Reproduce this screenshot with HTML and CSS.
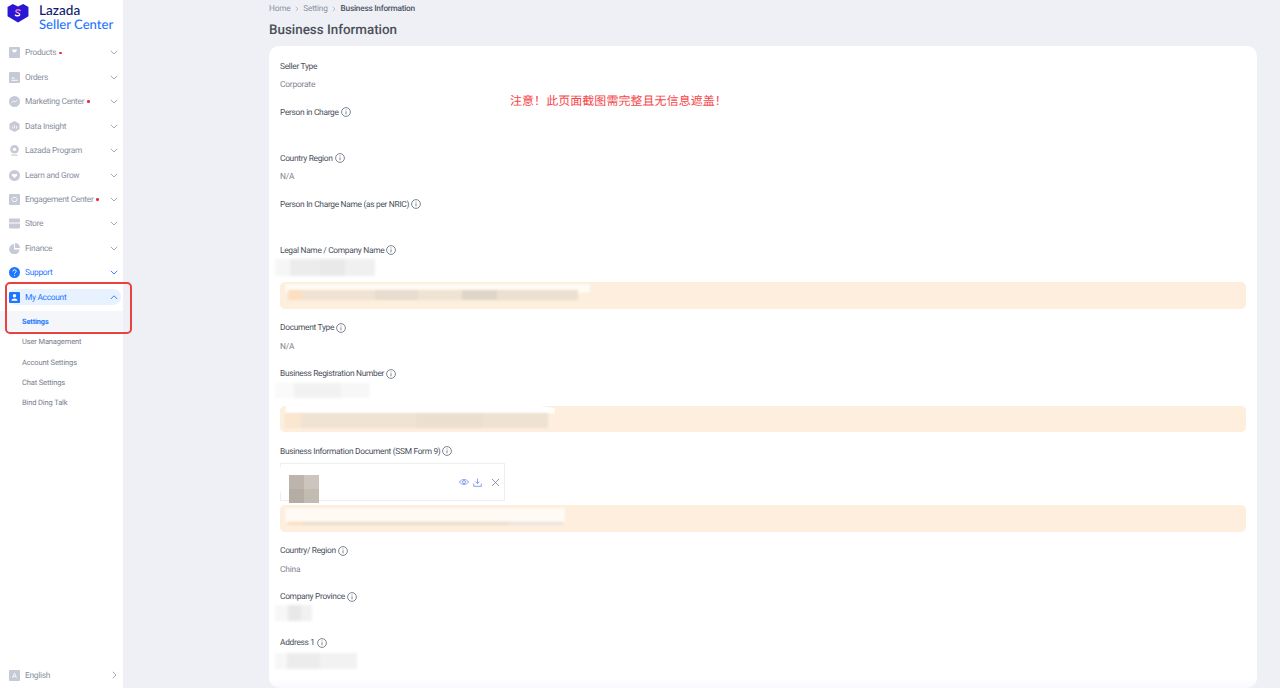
FILE: index.html
```html
<!DOCTYPE html>
<html lang="en">
<head>
<meta charset="utf-8">
<title>Business Information</title>
<link rel="stylesheet" href="styles.css">
</head>
<body>
<div class="app">
  <aside class="sidebar">
    <header class="brand">
      <svg class="brand-mark" viewBox="0 0 22 20"><defs><linearGradient id="brandS" x1="0" y1="0" x2="0" y2="1"><stop offset="0" stop-color="#ff5fc0"/><stop offset="1" stop-color="#ffffff"/></linearGradient></defs><path d="M0 3.2 5.5 0 11 2.600 16.500 0 22 3.200V13l-11 6.600L0 13z" fill="#2a17d6"/><path d="M13.300 6.800c-.8-.9-4.200-1.200-4.500.6-.3 2 4.200 1.500 4 3.700-.2 1.800-3.400 1.600-4.500.6" fill="none" stroke="url(#brandS)" stroke-width="1.500" stroke-linecap="round"/></svg>
      <div class="brand-text"><div class="brand-top">Lazada</div><div class="brand-bottom">Seller Center</div></div>
    </header>
    <nav class="nav">
      <div class="nav-item"><svg class="nav-icon" viewBox="0 0 11 11"><path fill-rule="evenodd" d="M1 0h9a1 1 0 0 1 1 1v9a1 1 0 0 1-1 1H1a1 1 0 0 1-1-1V1a1 1 0 0 1 1-1zm2 2.500c.4 2 1.200 3 2.500 3S7.600 4.500 8 2.500z"/></svg><span class="nav-label">Products</span><i class="dot"></i><svg class="chev" viewBox="0 0 8 5"><path d="M.8.8 4 4 7.200.8"/></svg></div>
      <div class="nav-item"><svg class="nav-icon" viewBox="0 0 11 11"><path fill-rule="evenodd" d="M1 0h9a1 1 0 0 1 1 1v9a1 1 0 0 1-1 1H1a1 1 0 0 1-1-1V1a1 1 0 0 1 1-1zm1.500 5.500v1h3v-1zm0 2.200v1h6v-1z"/></svg><span class="nav-label">Orders</span><svg class="chev" viewBox="0 0 8 5"><path d="M.8.8 4 4 7.200.8"/></svg></div>
      <div class="nav-item"><svg class="nav-icon" viewBox="0 0 11 11"><circle cx="5.500" cy="5.500" r="5.500"/><path d="M2.500 6.500 4.500 5l1.500 1 2.500-2" fill="none" stroke="#fff" stroke-width=".8"/></svg><span class="nav-label">Marketing Center</span><i class="dot"></i><svg class="chev" viewBox="0 0 8 5"><path d="M.8.8 4 4 7.200.8"/></svg></div>
      <div class="nav-item"><svg class="nav-icon" viewBox="0 0 11 11"><path d="M5.500 0 10.500 2.700v5.600L5.500 11 .5 8.300V2.700z"/><path d="M3.500 5.500v2M5.500 4v3.500M7.500 5v2.500" stroke="#fff" stroke-width=".8"/></svg><span class="nav-label">Data Insight</span><svg class="chev" viewBox="0 0 8 5"><path d="M.8.8 4 4 7.200.8"/></svg></div>
      <div class="nav-item"><svg class="nav-icon" viewBox="0 0 11 12"><circle cx="5.500" cy="4.700" r="4.700"/><circle cx="5.500" cy="4.700" r="1.800" fill="#fff"/><path d="M2 11h7" stroke="#c6cad6" stroke-width="1.200"/></svg><span class="nav-label">Lazada Program</span><svg class="chev" viewBox="0 0 8 5"><path d="M.8.8 4 4 7.200.8"/></svg></div>
      <div class="nav-item"><svg class="nav-icon" viewBox="0 0 11 11"><circle cx="5.500" cy="5.500" r="5.500"/><path d="M5.500 8.200 3 5.700c-1-1.300.9-2.800 2.500-1.300 1.600-1.500 3.500 0 2.500 1.300z" fill="#fff"/></svg><span class="nav-label">Learn and Grow</span><svg class="chev" viewBox="0 0 8 5"><path d="M.8.8 4 4 7.200.8"/></svg></div>
      <div class="nav-item"><svg class="nav-icon" viewBox="0 0 11 11"><rect width="11" height="11" rx="1"/><path d="M4 3.500 2.800 5.500 4 7.500h3l1.200-2L7 3.500z" fill="none" stroke="#fff" stroke-width=".8"/></svg><span class="nav-label">Engagement Center</span><i class="dot"></i><svg class="chev" viewBox="0 0 8 5"><path d="M.8.8 4 4 7.200.8"/></svg></div>
      <div class="nav-item"><svg class="nav-icon" viewBox="0 0 11 11"><path d="M1 .5h9a1 1 0 0 1 1 1v3H0v-3a1 1 0 0 1 1-1zM0 5.500h11v4a1 1 0 0 1-1 1H1a1 1 0 0 1-1-1z"/></svg><span class="nav-label">Store</span><svg class="chev" viewBox="0 0 8 5"><path d="M.8.8 4 4 7.200.8"/></svg></div>
      <div class="nav-item"><svg class="nav-icon" viewBox="0 0 11 11"><path d="M5 1v5.500h5.500A5.200 5.200 0 1 1 5 1z"/><path d="M6 0a5 5 0 0 1 5 5H6z"/></svg><span class="nav-label">Finance</span><svg class="chev" viewBox="0 0 8 5"><path d="M.8.8 4 4 7.200.8"/></svg></div>
      <div class="nav-item is-blue"><svg class="nav-icon" viewBox="0 0 11 11"><circle cx="5.500" cy="5.500" r="5.500"/><path d="M3.900 4.300c0-2 3.300-2 3.300 0 0 1.300-1.600 1.200-1.600 2.400M5.600 8v.8" fill="none" stroke="#fff" stroke-width="1"/></svg><span class="nav-label">Support</span><svg class="chev" viewBox="0 0 8 5"><path d="M.8.8 4 4 7.200.8"/></svg></div>
      <div class="nav-item is-blue is-open"><div class="nav-pill"><svg class="nav-icon" viewBox="0 0 11 11"><rect width="11" height="11" rx="1"/><circle cx="5.500" cy="3.800" r="1.700" fill="#fff"/><path d="M2.500 8.800h6c0-3-6-3-6 0z" fill="#fff"/></svg><span class="nav-label">My Account</span><svg class="chev" viewBox="0 0 8 5"><path d="M.8 4 4 .8 7.200 4"/></svg></div></div>
      <ul class="subnav">
        <li class="subnav-item is-current">Settings</li>
        <li class="subnav-item">User Management</li>
        <li class="subnav-item">Account Settings</li>
        <li class="subnav-item">Chat Settings</li>
        <li class="subnav-item">Bind Ding Talk</li>
      </ul>
    </nav>
    <div class="nav-item lang"><svg class="nav-icon" viewBox="0 0 11 11"><rect width="11" height="11" rx="1"/><path d="M3.500 8 5.500 3l2 5M4.300 6.500h2.400" fill="none" stroke="#fff" stroke-width=".8"/></svg><span class="nav-label">English</span><svg class="chev-right" viewBox="0 0 5 8"><path d="M.8.8 4 4 .8 7.200"/></svg></div>
    <div class="annot"></div>
  </aside>

  <main class="main">
    <div class="content">
      <div class="crumbs"><span>Home</span><svg class="crumb-sep" viewBox="0 0 4 6"><path d="M.8.8 3 3 .8 5.200"/></svg><span>Setting</span><svg class="crumb-sep" viewBox="0 0 4 6"><path d="M.8.8 3 3 .8 5.200"/></svg><span class="crumb-now">Business Information</span></div>
      <h1 class="title">Business Information</h1>
      <section class="card">
        <p class="notice">注意！此页面截图需完整且无信息遮盖！</p>

        <div class="field"><div class="label">Seller Type</div><div class="value">Corporate</div></div>
        <div class="field"><div class="label">Person in Charge<svg class="info" viewBox="0 0 10 10"><circle cx="5" cy="5" r="4.400"/><path d="M5 4.300v3M5 2.500v.9"/></svg></div><div class="value"></div></div>
        <div class="field"><div class="label">Country Region<svg class="info" viewBox="0 0 10 10"><circle cx="5" cy="5" r="4.400"/><path d="M5 4.300v3M5 2.500v.9"/></svg></div><div class="value">N/A</div></div>
        <div class="field"><div class="label">Person In Charge Name (as per NRIC)<svg class="info" viewBox="0 0 10 10"><circle cx="5" cy="5" r="4.400"/><path d="M5 4.300v3M5 2.500v.9"/></svg></div><div class="value"></div></div>

        <div class="field"><div class="label">Legal Name / Company Name<svg class="info" viewBox="0 0 10 10"><circle cx="5" cy="5" r="4.400"/><path d="M5 4.300v3M5 2.500v.9"/></svg></div>
          <div class="value"><div class="smudge smudge-legal"></div></div>
          <div class="banner"><div class="wash wash-a"></div><div class="mosaic mosaic-a"></div></div>
        </div>
        <div class="field"><div class="label">Document Type<svg class="info" viewBox="0 0 10 10"><circle cx="5" cy="5" r="4.400"/><path d="M5 4.300v3M5 2.500v.9"/></svg></div><div class="value">N/A</div></div>
        <div class="field"><div class="label">Business Registration Number<svg class="info" viewBox="0 0 10 10"><circle cx="5" cy="5" r="4.400"/><path d="M5 4.300v3M5 2.500v.9"/></svg></div>
          <div class="value"><div class="smudge smudge-reg"></div></div>
          <div class="banner"><div class="wash wash-b"></div><div class="mosaic mosaic-b"></div></div>
        </div>
        <div class="field"><div class="label">Business Information Document (SSM Form 9)<svg class="info" viewBox="0 0 10 10"><circle cx="5" cy="5" r="4.400"/><path d="M5 4.300v3M5 2.500v.9"/></svg></div>
          <div class="file">
            <div class="file-wash"></div>
            <div class="file-thumb"></div>
            <div class="file-actions">
              <svg class="fa fa-eye" viewBox="0 0 10 8"><path d="M.5 4C2.500.7 7.500.7 9.500 4 7.500 7.300 2.500 7.300.5 4z"/><circle cx="5" cy="4" r="1.500"/></svg>
              <svg class="fa fa-down" viewBox="0 0 9 9"><path d="M4.500.5v5M2.500 3.700l2 2 2-2M.7 5.500v2.800h7.600V5.500"/></svg>
              <svg class="fa fa-close" viewBox="0 0 9 9"><path d="M1 1l7 7M8 1 1 8"/></svg>
            </div>
          </div>
          <div class="banner banner-file"><div class="wash wash-c"></div><div class="mosaic mosaic-c"></div></div>
        </div>
        <div class="field"><div class="label">Country/ Region<svg class="info" viewBox="0 0 10 10"><circle cx="5" cy="5" r="4.400"/><path d="M5 4.300v3M5 2.500v.9"/></svg></div><div class="value">China</div></div>
        <div class="field"><div class="label">Company Province<svg class="info" viewBox="0 0 10 10"><circle cx="5" cy="5" r="4.400"/><path d="M5 4.300v3M5 2.500v.9"/></svg></div><div class="value"><div class="smudge smudge-prov"></div></div></div>
        <div class="field"><div class="label">Address 1<svg class="info" viewBox="0 0 10 10"><circle cx="5" cy="5" r="4.400"/><path d="M5 4.300v3M5 2.500v.9"/></svg></div><div class="value"><div class="smudge smudge-addr"></div></div></div>
      </section>
    </div>
  </main>
</div>
</body>
</html>
```
FILE: styles.css
```css
* { box-sizing: border-box; }
html, body { margin: 0; height: 100%; overflow: hidden; }
body { background: #eef0f5; font-family: Roboto, "Noto Sans CJK SC", sans-serif; color: #4a4f5c; text-rendering: geometricPrecision; }
.app { display: flex; height: 688px; }

.sidebar { position: relative; flex: 0 0 123px; width: 123px; height: 688px; background: #fff; display: flex; flex-direction: column; }
.brand { height: 40.6px; display: flex; align-items: flex-start; padding: 4px 0 0 7px; gap: 11px; }
.brand-mark { width: 22px; height: 19px; flex: none; }
.brand-text { font-family: Lato, "Noto Sans", sans-serif; font-weight: 500; line-height: 13.500px; margin-left: -1px; }
.brand-top { font-size: 13.600px; color: #0f1a6e; }
.brand-bottom { font-size: 13.100px; color: #1f76ff; }

.nav { display: flex; flex-direction: column; }
.nav-item { height: 24.450px; display: flex; align-items: center; padding: 0 5px 0 9px; font-size: 8.400px; color: #8a8f9e; position: relative; }
.nav-icon { width: 11px; height: 11px; flex: none; fill: #c6cad6; margin-right: 5px; }
.nav-label { white-space: nowrap; letter-spacing: -.3px; padding-top: 1px; }
.dot { width: 2.500px; height: 2.500px; border-radius: 50%; background: #f0283c; margin-left: 3px; }
.chev { width: 8px; height: 5px; margin-left: auto; fill: none; stroke: #9aa1b0; stroke-width: .9; flex: none; }
.chev-right { width: 5px; height: 8px; margin-left: auto; margin-right: 1px; fill: none; stroke: #9aa1b0; stroke-width: .9; flex: none; }
.is-blue { color: #1f76ff; }
.is-blue .nav-icon { fill: #1f76ff; }
.is-blue .chev { stroke: #1f76ff; }
.is-open { padding: 0 2px 0 8px; }
.nav-pill { flex: 1; height: 16px; display: flex; align-items: center; padding: 0 3px 0 1px; background: #e8f2ff; border-radius: 8px; }
.subnav { list-style: none; margin: 1.800px 0 0; padding: 0; }
.subnav-item { height: 20.250px; line-height: 21.250px; padding-left: 22px; font-size: 7.500px; letter-spacing: -.13px; color: #787e8d; }
.subnav-item.is-current { background: #f5f6fa; color: #1f76ff; font-weight: 700; font-size: 7.400px; }
.lang { margin-top: auto; margin-bottom: .5px; }
.annot { position: absolute; left: 5px; top: 282px; width: 127px; height: 52px; border: 2px solid #e8413f; border-radius: 5px; }

.main { flex: 1; min-width: 0; padding: 0 23px 0 146px; }
.content { width: 988px; }
.crumbs { display: flex; align-items: center; gap: 4px; height: 17px; padding-top: 1px; font-size: 8.300px; letter-spacing: -.25px; color: #8b90a0; }
.crumb-sep { width: 4px; height: 6px; fill: none; stroke: #aab0bc; stroke-width: .8; margin: 0 .5px; }
.crumb-now { color: #4f5565; font-weight: 500; }
.title { margin: 4px 0 0; height: 25px; line-height: 20px; font-size: 13.400px; font-weight: 500; color: #4a4f5a; }

.card { position: relative; height: 642px; background: linear-gradient(180deg, #fff 0 632px, #f8f9fc 642px); border-radius: 10px; padding: 11px 11px 0; overflow: hidden; }
.notice { position: absolute; left: 241px; top: 47px; margin: 0; font-size: 12px; line-height: 16px; letter-spacing: .05px; color: #f4474a; font-family: "Noto Sans CJK SC", sans-serif; white-space: nowrap; }

.field { margin-bottom: 10px; }
.label { height: 18px; line-height: 18px; padding-top: 1px; font-size: 8.400px; letter-spacing: -.31px; color: #4a4f5c; display: flex; align-items: center; gap: 2px; white-space: nowrap; }
.value { position: relative; height: 18px; line-height: 18px; padding-top: 1px; font-size: 8.400px; letter-spacing: -.2px; color: #7f8492; }
.info { width: 10px; height: 10px; flex: none; margin-top: -1px; fill: none; stroke: #5d6473; stroke-width: .8; }

.smudge { position: absolute; filter: blur(1.500px); }
.smudge-legal { left: -5px; top: 0; width: 100px; height: 17px; background: linear-gradient(90deg, #f6f6f6 0 15%, #ececec 15% 45%, #e9e9e9 45% 70%, #f0f0f0 70%); }
.smudge-reg { left: -5px; top: 0; width: 95px; height: 15px; background: linear-gradient(90deg, #fafafa 0 20%, #f2f2f2 20% 70%, #f7f7f7 70%); }
.smudge-prov { left: -5px; top: -1px; width: 37px; height: 16px; background: linear-gradient(90deg, #f7f7f7 0 35%, #e8e8e8 35% 70%, #f1f1f1 70%); }
.smudge-addr { left: -5px; top: 1px; width: 82px; height: 16px; background: linear-gradient(90deg, #f7f7f7 0 15%, #ececec 15% 55%, #f2f2f2 55%); }

.banner { position: relative; height: 26.500px; margin-top: 5px; background: #fdeedd; border-radius: 5px; }
.banner-file { margin-top: 4px; }
.wash { position: absolute; background: #fffaf4; filter: blur(1px); }
.mosaic { position: absolute; filter: blur(.8px); }
.wash-a { left: 5px; top: 2px; width: 305px; height: 9px; }
.mosaic-a { left: 8px; top: 8px; width: 290px; height: 10px; background: linear-gradient(90deg, #fbdfc0 0 5%, #f0e3d3 5% 30%, #e7dccd 30% 45%, #efe3d4 45% 60%, #e0d6c8 60% 72%, #ece0d1 72%); }
.wash-b { left: 5px; top: -3px; width: 270px; height: 11px; background: #fff; clip-path: polygon(0 30%, 55% 30%, 70% 0, 85% 0, 100% 50%, 100% 100%, 0 100%); }
.mosaic-b { left: 5px; top: 7px; width: 263px; height: 15px; background: linear-gradient(90deg, #fbe6cf 0 6%, #efe3d4 6% 50%, #ebdfcf 50% 75%, #eee2d3 75%); }
.wash-c { left: 5px; top: 3px; width: 280px; height: 14px; background: #fffaf4; }
.mosaic-c { left: 8px; top: 17px; width: 275px; height: 3px; background: linear-gradient(90deg, #fbdfc0 0 5%, #e9decf 5% 80%, #ece4e0 80%); }

.file { position: relative; width: 225px; height: 38px; margin-top: 3px; border: 1px solid #eceef2; display: flex; align-items: center; justify-content: flex-end; }
.file-wash { position: absolute; left: -3px; top: 3px; width: 118px; height: 25px; background: #fff; filter: blur(1px); }
.file-thumb { position: absolute; left: 8px; top: 11px; width: 30px; height: 28px; background: linear-gradient(90deg, #bdb5ac 0 50%, #cbc5bd 50%) top / 100% 50% no-repeat, linear-gradient(90deg, #b5aca3 0 50%, #c2bbb2 50%) bottom / 100% 50% no-repeat; }
.file-actions { display: flex; align-items: center; padding-right: 4px; }
.fa { fill: none; stroke-width: .8; }
.fa-eye { width: 10px; height: 8px; stroke: #6a8cf0; }
.fa-down { width: 9px; height: 9px; stroke: #6a8cf0; margin-left: 4px; }
.fa-close { width: 9px; height: 9px; stroke: #737b8c; margin-left: 9px; }
```
